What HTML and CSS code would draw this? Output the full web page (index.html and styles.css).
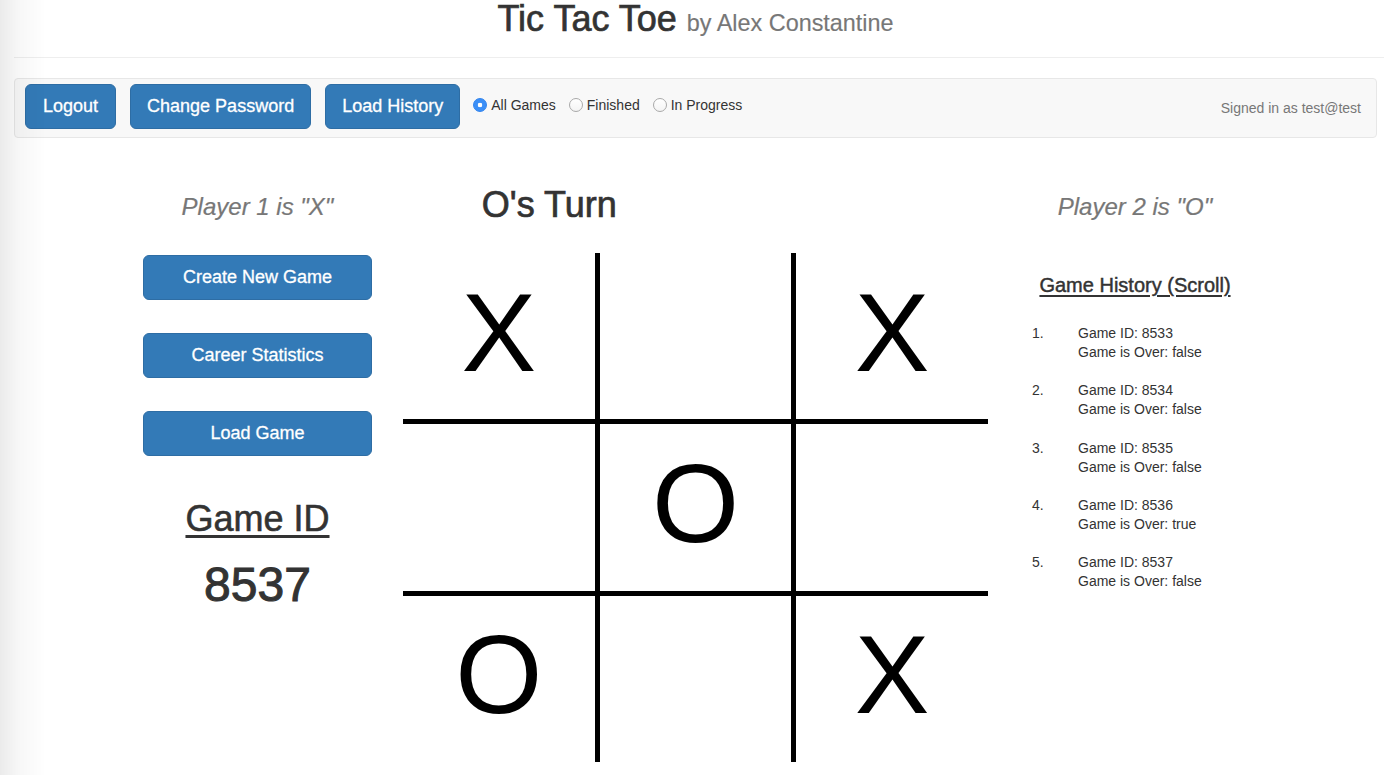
FILE: index.html
```html
<!DOCTYPE html>
<html lang="en">
<head>
<meta charset="utf-8">
<title>Tic Tac Toe</title>
<link rel="stylesheet" href="styles.css">
</head>
<body>
<div class="page">
  <h1 class="title">Tic Tac Toe <small>by Alex Constantine</small></h1>
  <hr class="rule">
  <nav class="navbar">
    <button class="btn btn-lg">Logout</button>
    <button class="btn btn-lg">Change Password</button>
    <button class="btn btn-lg">Load History</button>
    <div class="filters">
      <label class="radio"><input type="radio" name="filter" checked><span>All Games</span></label>
      <label class="radio"><input type="radio" name="filter"><span>Finished</span></label>
      <label class="radio"><input type="radio" name="filter"><span>In Progress</span></label>
    </div>
    <p class="signed">Signed in as test@test</p>
  </nav>

  <main class="main">
    <section class="side left">
      <h3 class="player">Player 1 is "X"</h3>
      <button class="btn btn-lg btn-block first">Create New Game</button>
      <button class="btn btn-lg btn-block">Career Statistics</button>
      <button class="btn btn-lg btn-block">Load Game</button>
      <h2 class="game-id-label">Game ID</h2>
      <div class="game-id">8537</div>
    </section>

    <section class="center">
      <div class="turn-row"><h2 class="turn">O's Turn</h2></div>
      <div class="board">
        <div class="cell">X</div>
        <div class="cell"></div>
        <div class="cell">X</div>
        <div class="cell"></div>
        <div class="cell">O</div>
        <div class="cell"></div>
        <div class="cell">O</div>
        <div class="cell"></div>
        <div class="cell">X</div>
      </div>
    </section>

    <section class="side right">
      <h3 class="player">Player 2 is "O"</h3>
      <h4 class="history-title">Game History (Scroll)</h4>
      <ol class="history">
        <li><span class="num">1.</span><span class="info">Game ID: 8533<br>Game is Over: false</span></li>
        <li><span class="num">2.</span><span class="info">Game ID: 8534<br>Game is Over: false</span></li>
        <li><span class="num">3.</span><span class="info">Game ID: 8535<br>Game is Over: false</span></li>
        <li><span class="num">4.</span><span class="info">Game ID: 8536<br>Game is Over: true</span></li>
        <li><span class="num">5.</span><span class="info">Game ID: 8537<br>Game is Over: false</span></li>
      </ol>
    </section>
  </main>
</div>
</body>
</html>
```

FILE: styles.css
```css
* { box-sizing: border-box; }

html, body {
  margin: 0;
  padding: 0;
  background: #fff;
}

body {
  font-family: "Liberation Sans", Arial, sans-serif;
  font-size: 14px;
  color: #333;
  overflow: hidden;
}

body::before {
  content: "";
  position: fixed;
  left: 0;
  top: 0;
  bottom: 0;
  width: 46px;
  background: linear-gradient(to right, rgba(0,0,0,0.08), rgba(0,0,0,0.03) 40%, rgba(0,0,0,0));
  pointer-events: none;
  z-index: 10;
}

.page {
  padding: 0 7px 0 14px;
}

.title {
  margin: 0;
  height: 37px;
  text-align: center;
  font-size: 36px;
  line-height: 37px;
  font-weight: 500;
  color: #333;
  -webkit-text-stroke: 0.7px #333;
}

.title small {
  font-size: 65%;
  line-height: 0;
  font-weight: 400;
  color: #777;
  -webkit-text-stroke: 0.15px #777;
}

.rule {
  margin: 20px -7px 0 0;
  border: 0;
  border-top: 1px solid #eee;
  height: 0;
}

.navbar {
  margin-top: 20px;
  height: 60px;
  background: #f8f8f8;
  border: 1px solid #e7e7e7;
  border-radius: 4px;
  display: flex;
  align-items: center;
  padding: 0 15px 3px 10px;
  gap: 14px;
}

.btn {
  font-family: "Liberation Sans", Arial, sans-serif;
  color: #fff;
  background: #337ab7;
  border: 1px solid #2e6da4;
  cursor: pointer;
  -webkit-text-stroke: 0.3px #fff;
}

.btn-lg {
  font-size: 18px;
  line-height: 23px;
  padding: 10px 16px;
  border-radius: 6px;
}

.btn-lg:first-child {
  padding: 10px 17px;
}

.filters {
  display: flex;
  align-items: center;
  gap: 13px;
  margin-left: -1px;
  margin-top: -3px;
}

.radio {
  display: flex;
  align-items: center;
  gap: 4px;
  font-size: 14px;
  color: #333;
}

.radio input {
  appearance: none;
  -webkit-appearance: none;
  margin: 0;
  width: 14px;
  height: 14px;
  border-radius: 50%;
  border: 1px solid #a9a9a9;
  background: linear-gradient(#fff, #f4f4f4);
}

.radio input:checked {
  border-color: #2f83ee;
  background: radial-gradient(circle, #fff 0 2px, #3b8ff7 2.6px);
}

.signed {
  margin: 0 0 0 auto;
  font-size: 14px;
  color: #777;
  padding-top: 2px;
}

.main {
  margin-top: 47px;
  padding-left: 3px;
  display: grid;
  grid-template-columns: 229px 585px 232px;
  column-gap: 31px;
  justify-content: center;
}

.side {
  padding-top: 9px;
  display: flex;
  flex-direction: column;
}

.player {
  margin: 0;
  font-size: 24px;
  line-height: 26px;
  font-style: italic;
  font-weight: 400;
  color: #777;
  text-align: center;
  -webkit-text-stroke: 0.2px #777;
}

.btn-block {
  width: 100%;
  margin-top: 33px;
  padding: 10px 16px;
}

.btn-block.first {
  margin-top: 35px;
}

.game-id-label {
  margin: 43px 0 0;
  font-size: 36px;
  line-height: 40px;
  font-weight: 500;
  text-align: center;
  text-decoration: underline;
  text-decoration-thickness: 3px;
  text-underline-offset: 4px;
  -webkit-text-stroke: 0.6px #333;
}

.game-id {
  margin-top: 20px;
  font-size: 48px;
  line-height: 52px;
  font-weight: 500;
  text-align: center;
  -webkit-text-stroke: 1px #333;
}

.center {
  display: flex;
  flex-direction: column;
}

.turn-row {
  width: 50%;
  text-align: center;
}

.turn {
  margin: 0;
  font-size: 36px;
  line-height: 40px;
  font-weight: 500;
  color: #333;
  -webkit-text-stroke: 0.7px #333;
}

.board {
  margin-top: 28px;
  height: 509px;
  display: grid;
  grid-template-columns: repeat(3, 1fr);
  grid-template-rows: repeat(3, 1fr);
  gap: 5px;
  background: #000;
}

.cell {
  background: #fff;
  display: flex;
  align-items: center;
  justify-content: center;
  font-size: 112px;
  line-height: 112px;
  color: #000;
  padding-bottom: 7px;
}

.history-title {
  margin: 54px 0 0;
  font-size: 20px;
  line-height: 22px;
  font-weight: 500;
  text-align: center;
  text-decoration: underline;
  text-underline-offset: 3px;
  -webkit-text-stroke: 0.45px #333;
}

.history {
  list-style: none;
  margin: 28px 0 0;
  padding: 0 0 0 13px;
}

.history li {
  display: flex;
  font-size: 14px;
  line-height: 19px;
  margin-bottom: 19.25px;
}

.history .num {
  width: 46px;
  flex: none;
}
```
